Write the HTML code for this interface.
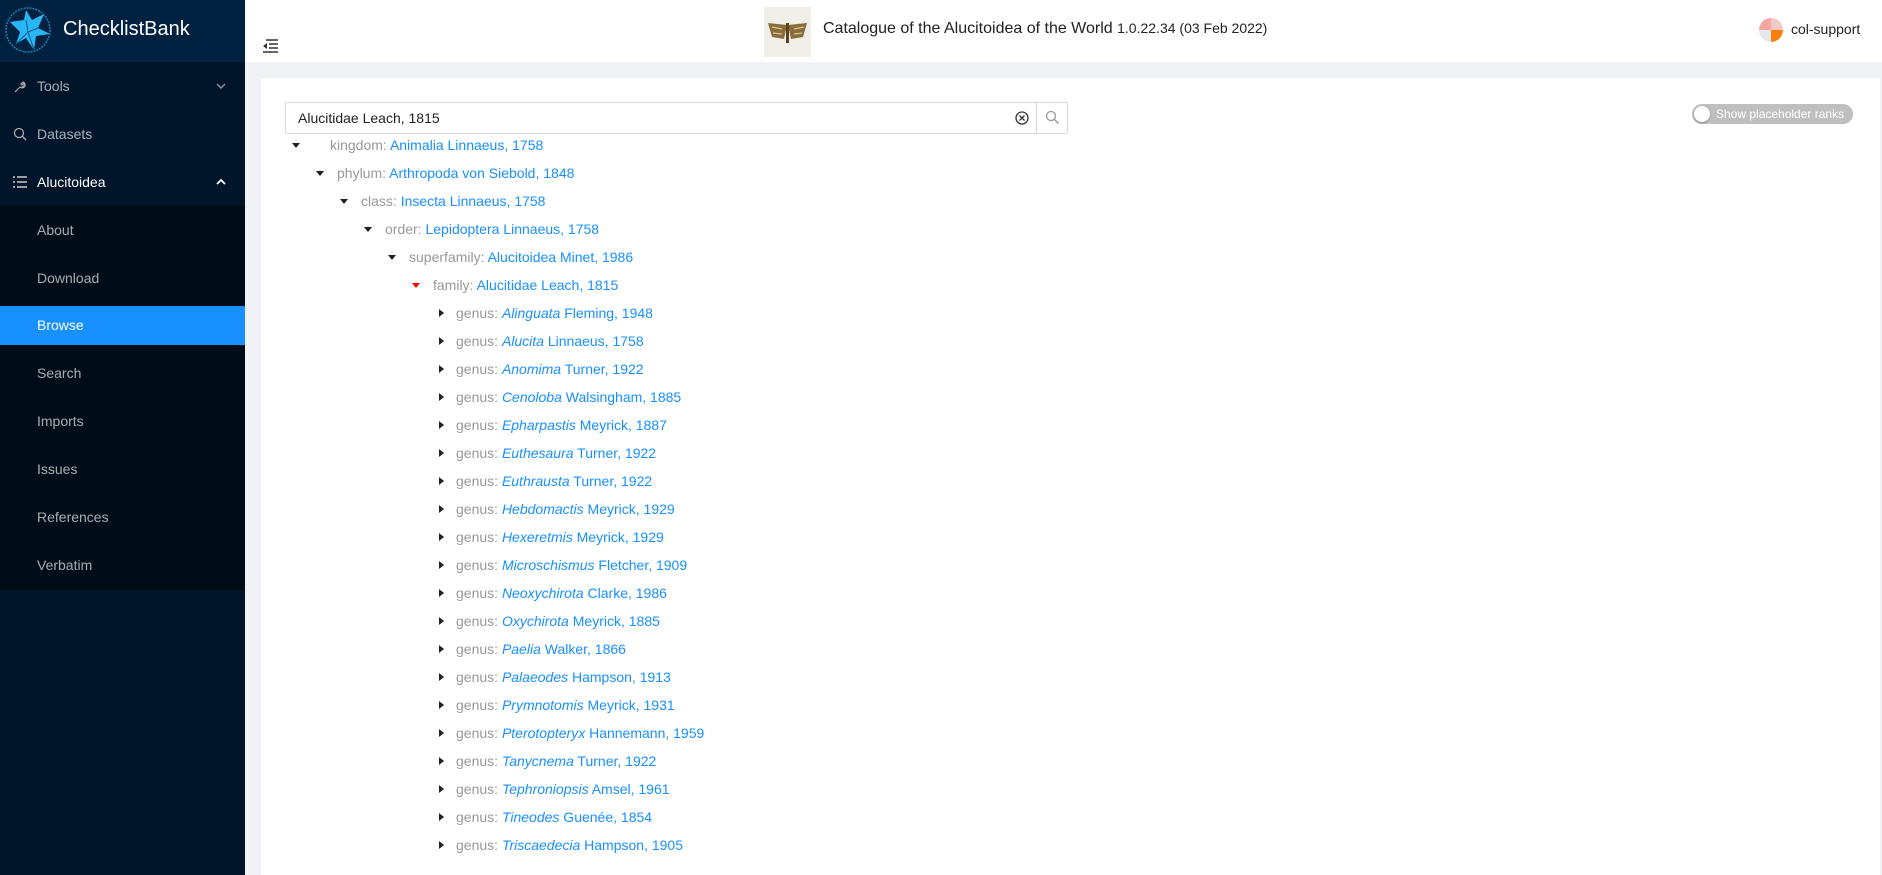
<!DOCTYPE html>
<html><head><meta charset="utf-8"><style>
*{box-sizing:border-box;margin:0;padding:0}
body{width:1882px;height:875px;overflow:hidden;background:#f0f2f5;font-family:"Liberation Sans",Arial,sans-serif;font-size:14px;position:relative}
#side{position:absolute;left:0;top:0;width:245px;height:875px;background:#001529}
#logo{height:62px;background:#002140;position:relative}
#logo span{position:absolute;left:63px;top:18px;color:#fff;font-size:20px}
.mi{position:absolute;left:0;width:245px;height:48px;line-height:48px;color:rgba(255,255,255,.65);font-size:14px;padding-left:37px}
.mi .ic{position:absolute;left:13px;top:0}
#sub{position:absolute;left:0;top:206px;width:245px;height:384px;background:#000c17}
#hdr{position:absolute;left:245px;top:0;right:0;height:62px;background:#fff}
#panel{position:absolute;left:261px;top:78px;width:1619px;height:797px;background:#fff}
.row{position:absolute;height:20px;line-height:20px;white-space:nowrap;font-size:14px}
.row .r{color:#999}
.row a{color:#1890ff;text-decoration:none}
.car{position:absolute;width:0;height:0;border-left:4px solid transparent;border-right:4px solid transparent;border-top:5px solid #222;top:8px}
.carr{position:absolute;width:0;height:0;border-top:4px solid transparent;border-bottom:4px solid transparent;border-left:5px solid #222;top:6px}
</style></head><body>
<div id="side">
 <div id="logo">
  <svg style="position:absolute;left:4px;top:6px" width="48" height="48" viewBox="0 0 48 48"><circle cx="24" cy="24" r="22" fill="none" stroke="#1a7fb5" stroke-width="1.5" stroke-dasharray="2 1"/><path d="M6 16 L20 14 L22 4 L28 14 L40 8 L34 22 L46 28 L32 30 L30 44 L22 32 L12 38 L16 26Z" fill="#29b6f6"/><path d="M22 14 L24 26 L34 22 M24 26 L30 44 M24 26 L12 38" stroke="#0a5a8a" stroke-width="1" fill="none"/></svg>
  <span>ChecklistBank</span>
 </div>
 <div class="mi" style="top:62px"><svg class="ic" style="top:18px" width="14" height="14" viewBox="0 0 14 14"><path d="M2 12 L7 7 M7 7 a3 3 0 1 0 3-5 l-2 2 1 1 2-2 a3 3 0 0 1-4 4z" stroke="#aaa" fill="none" stroke-width="1.2"/></svg>Tools<svg style="position:absolute;left:216px;top:20px" width="10" height="8"><path d="M1 2 L5 6 L9 2" stroke="#999" fill="none" stroke-width="1.4"/></svg></div>
 <div class="mi" style="top:110px"><svg class="ic" style="top:17px" width="14" height="14"><circle cx="6" cy="6" r="4.5" stroke="#aaa" fill="none" stroke-width="1.3"/><path d="M9.5 9.5 L13 13" stroke="#aaa" stroke-width="1.5"/></svg>Datasets</div>
 <div class="mi" style="top:158px;color:#fff"><svg class="ic" style="top:18px" width="14" height="12"><path d="M0 1h2M4 1h10M0 6h2M4 6h10M0 11h2M4 11h10" stroke="#ccc" stroke-width="1.5"/></svg>Alucitoidea<svg style="position:absolute;left:216px;top:20px" width="10" height="8"><path d="M1 6 L5 2 L9 6" stroke="#fff" fill="none" stroke-width="1.8"/></svg></div>
 <div id="sub"></div>
 <div class="mi" style="top:206px">About</div>
 <div class="mi" style="top:254px">Download</div>
 <div class="mi" style="top:306px;height:39px;line-height:39px;background:#1890ff;color:#fff">Browse</div>
 <div class="mi" style="top:349px">Search</div>
 <div class="mi" style="top:397px">Imports</div>
 <div class="mi" style="top:445px">Issues</div>
 <div class="mi" style="top:493px">References</div>
 <div class="mi" style="top:541px">Verbatim</div>
</div>
<div id="hdr">
 <svg style="position:absolute;left:17px;top:39px" width="16" height="14"><path d="M4 1h12M7 5h9M7 9h9M1 13h15" stroke="#333" stroke-width="1.5"/><path d="M5 4 L1 7 L5 10Z" fill="#333"/></svg>
 <div style="position:absolute;left:519px;top:7px;width:47px;height:50px;background:#f0efea"><svg width="47" height="50"><path d="M23 18 L4 16 L8 30 L20 32 Z M24 18 L43 16 L39 30 L27 32Z" fill="#8a6d3b"/><path d="M22 16 h3 v20 h-3z" fill="#5a4320"/><path d="M8 20 l10 2 M30 22 l10-2 M9 26 l9 1 M30 27 l8-1" stroke="#d8c79a" stroke-width="1.2"/></svg></div>
 <div style="position:absolute;left:578px;top:20px;font-size:16px;color:#222">Catalogue of the Alucitoidea of the World <span style="font-size:14px">1.0.22.34 (03 Feb 2022)</span></div>
 <svg style="position:absolute;left:1514px;top:18px" width="24" height="24"><clipPath id="c"><circle cx="12" cy="12" r="12"/></clipPath><g clip-path="url(#c)"><rect width="12" height="12" fill="#f4a6a0"/><rect x="12" width="12" height="12" fill="#f2c9c9"/><rect y="12" width="12" height="12" fill="#e6e8f0"/><rect x="12" y="12" width="12" height="12" fill="#fd7e0a"/></g></svg>
 <div style="position:absolute;left:1546px;top:21px;font-size:14px;color:#222">col-support</div>
</div>
<div id="panel">
 <div style="position:absolute;left:24px;top:24px;width:783px;height:32px;border:1px solid #d9d9d9;border-radius:2px">
  <div style="position:absolute;left:12px;top:7px;color:#222;font-size:14px">Alucitidae Leach, 1815</div>
  <svg style="position:absolute;left:729px;top:8px" width="14" height="14"><circle cx="7" cy="7" r="6" stroke="#333" fill="none" stroke-width="1.3"/><path d="M4.5 4.5l5 5M9.5 4.5l-5 5" stroke="#333" stroke-width="1.3"/></svg>
  <div style="position:absolute;left:750px;top:-1px;width:32px;height:32px;border-left:1px solid #d9d9d9"><svg style="position:absolute;left:8px;top:8px" width="15" height="15"><circle cx="6" cy="6" r="4.5" stroke="#999" fill="none" stroke-width="1.3"/><path d="M9.5 9.5L13.5 13.5" stroke="#999" stroke-width="1.4"/></svg></div>
 </div>
 <div style="position:absolute;left:1431px;top:26px;width:161px;height:20px;border-radius:10px;background:#bfbfbf">
  <div style="position:absolute;left:2px;top:2px;width:16px;height:16px;border-radius:50%;background:#fff;box-shadow:0 1px 2px rgba(0,0,0,.3)"></div>
  <div style="position:absolute;left:24px;top:3px;color:#fff;font-size:12px">Show placeholder ranks</div>
 </div>
</div>
<div id="rows" style="position:absolute;left:0;top:0">
<div class="row" style="left:330px;top:135px"><i class="car" style="left:-38px"></i><span class="r">kingdom: </span><a>Animalia Linnaeus, 1758</a></div>
<div class="row" style="left:337px;top:163px"><i class="car" style="left:-21px"></i><span class="r">phylum: </span><a>Arthropoda von Siebold, 1848</a></div>
<div class="row" style="left:361px;top:191px"><i class="car" style="left:-21px"></i><span class="r">class: </span><a>Insecta Linnaeus, 1758</a></div>
<div class="row" style="left:385px;top:219px"><i class="car" style="left:-21px"></i><span class="r">order: </span><a>Lepidoptera Linnaeus, 1758</a></div>
<div class="row" style="left:409px;top:247px"><i class="car" style="left:-21px"></i><span class="r">superfamily: </span><a>Alucitoidea Minet, 1986</a></div>
<div class="row" style="left:433px;top:275px"><i class="car" style="left:-21px;border-top-color:#f00"></i><span class="r">family: </span><a>Alucitidae Leach, 1815</a></div>
</div>
<div id="g" style="position:absolute;left:0;top:0"></div>
<script>
var g=[["Alinguata","Fleming, 1948"],["Alucita","Linnaeus, 1758"],["Anomima","Turner, 1922"],["Cenoloba","Walsingham, 1885"],["Epharpastis","Meyrick, 1887"],["Euthesaura","Turner, 1922"],["Euthrausta","Turner, 1922"],["Hebdomactis","Meyrick, 1929"],["Hexeretmis","Meyrick, 1929"],["Microschismus","Fletcher, 1909"],["Neoxychirota","Clarke, 1986"],["Oxychirota","Meyrick, 1885"],["Paelia","Walker, 1866"],["Palaeodes","Hampson, 1913"],["Prymnotomis","Meyrick, 1931"],["Pterotopteryx","Hannemann, 1959"],["Tanycnema","Turner, 1922"],["Tephroniopsis","Amsel, 1961"],["Tineodes","Guenée, 1854"],["Triscaedecia","Hampson, 1905"]];
var h="";g.forEach(function(x,i){h+='<div class="row" style="left:456px;top:'+(303+i*28)+'px"><i class="carr" style="left:-17px"></i><span class="r">genus: </span><a><i>'+x[0]+'</i> '+x[1]+'</a></div>'});
document.getElementById("g").innerHTML=h;
</script>
</body></html>
